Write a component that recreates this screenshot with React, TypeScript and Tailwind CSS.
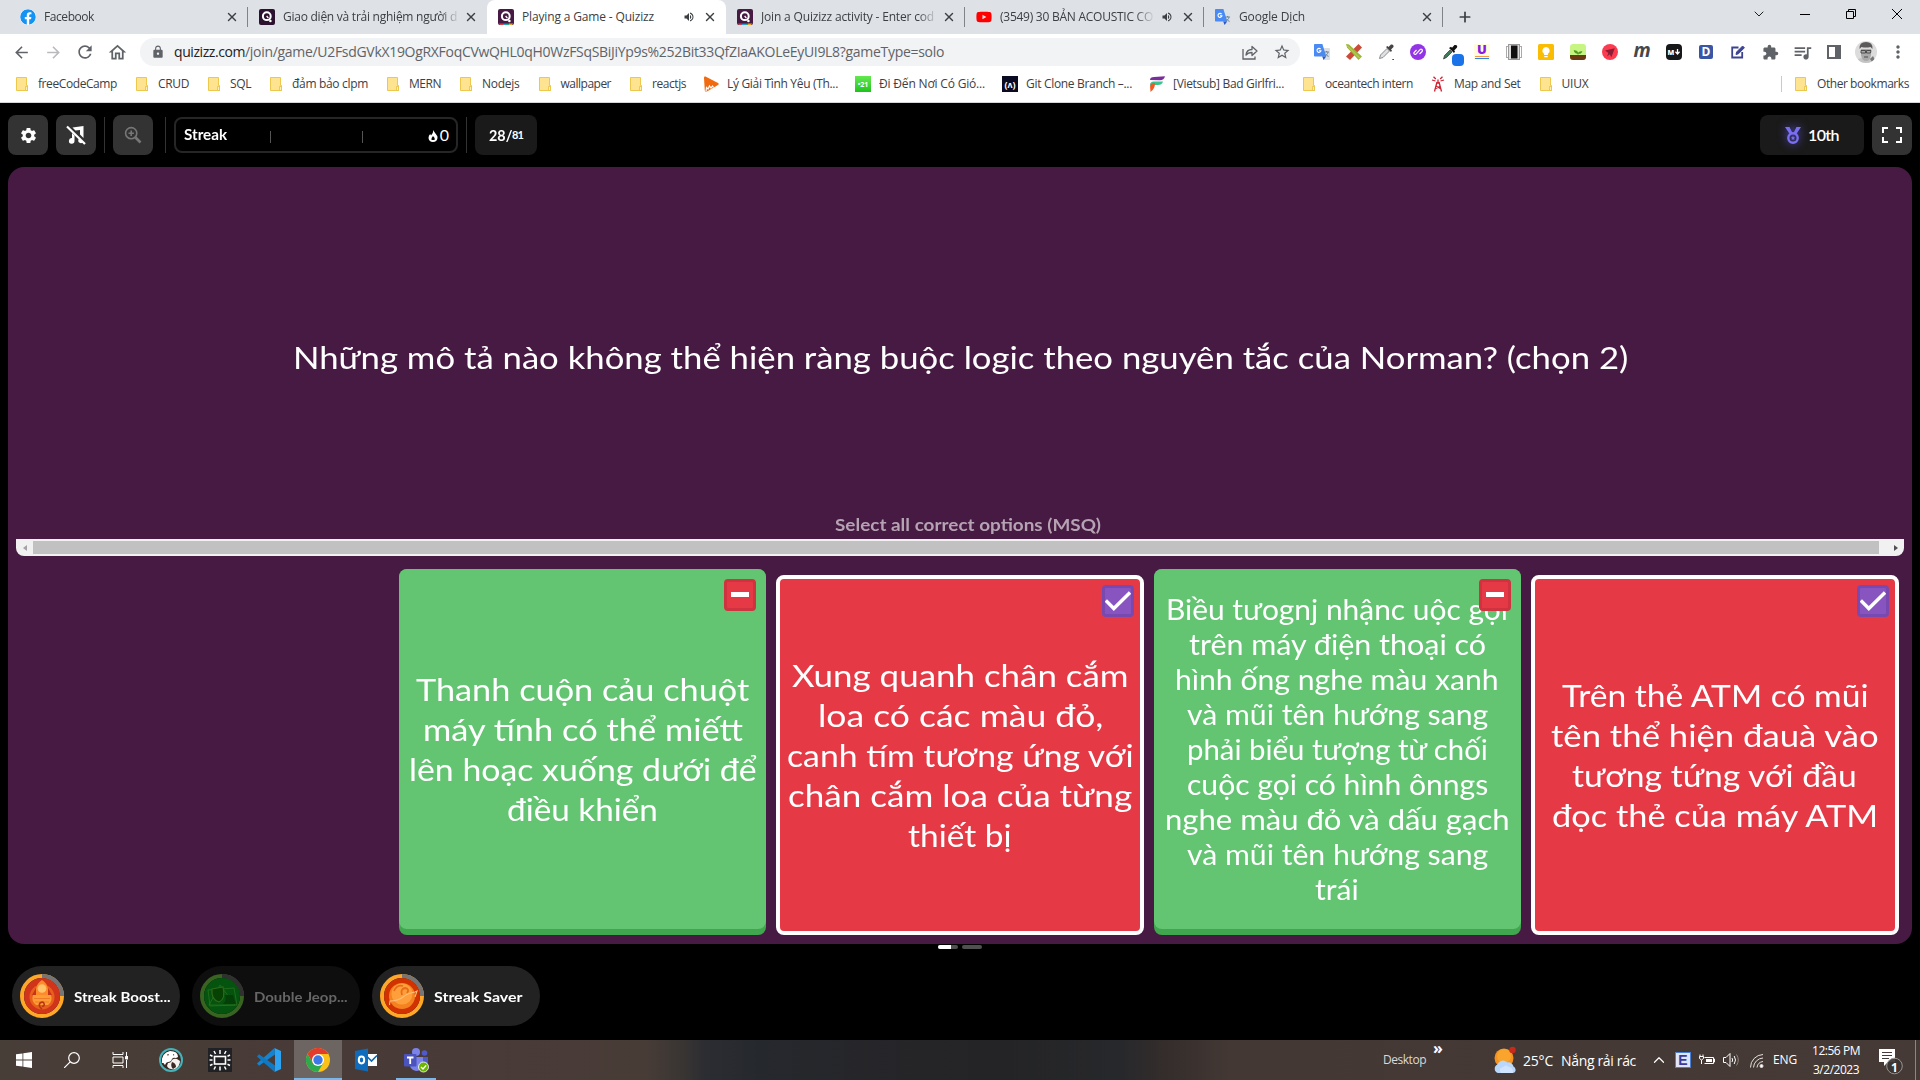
import { useLayoutEffect, useRef, useState } from 'react';
import type { ReactNode } from 'react';
import { FaFacebook, FaYoutube } from 'react-icons/fa';
import {
  MdArrowBack,
  MdArrowForward,
  MdExtension,
  MdLock,
  MdMoreVert,
  MdOutlineHome,
  MdQueueMusic,
  MdRefresh,
  MdSettings,
  MdStarBorder,
  MdVolumeUp,
} from 'react-icons/md';
import { Check, ChevronDown, ChevronUp, Plus, X } from 'lucide-react';

/* One line of text, tracked so that it fills the given width. */
function Line({ w, children, className = '' }: { w: number; children: string; className?: string }) {
  const ref = useRef<HTMLSpanElement>(null);
  const [tracking, setTracking] = useState(0);
  useLayoutEffect(() => {
    const el = ref.current;
    if (!el) return;
    const natural = el.getBoundingClientRect().width;
    setTracking((w - natural) / children.length);
  }, [w, children]);
  return (
    <span ref={ref} className={`inline-block whitespace-pre ${className}`} style={{ letterSpacing: `${tracking}px` }}>
      {children}
    </span>
  );
}

/* One line of wide display text, its letters stretched to fill the given width. */
function WideLine({ w, children, className = '' }: { w: number; children: string; className?: string }) {
  const ref = useRef<HTMLSpanElement>(null);
  const [scale, setScale] = useState(1);
  useLayoutEffect(() => {
    if (ref.current) setScale(w / ref.current.offsetWidth);
  }, [w, children]);
  return (
    <span className={`inline-block whitespace-pre ${className}`} style={{ width: w }}>
      <span ref={ref} className="inline-block origin-left" style={{ transform: `scaleX(${scale})` }}>
        {children}
      </span>
    </span>
  );
}

/* ---------- tab strip ---------- */

function QuizizzIcon({ rainbow = false }: { rainbow?: boolean }) {
  return (
    <svg viewBox="0 0 16 16" className="size-4">
      <rect width="16" height="16" rx="2" fill={rainbow ? '#461a42' : '#2d1230'} />
      {rainbow && (
        <g>
          <path d="M1 14.600h4V16H2z" fill="#e03c4a" />
          <path d="M5 14.600h3V16H5z" fill="#2d9cdb" />
          <path d="M8 14.600h3V16H8z" fill="#27ae8f" />
          <path d="M11 14.600h4L14 16h-3z" fill="#f2a623" />
        </g>
      )}
      <circle cx="7.800" cy="7.200" r="3.900" fill="none" stroke="#fff" strokeWidth="2" />
      <circle cx="11.400" cy="12" r="1.300" fill="#fff" />
      <path d="M7.600 7l1.800 2.200" stroke="#fff" strokeWidth="1.300" />
    </svg>
  );
}

function TranslateIcon() {
  return (
    <svg viewBox="0 0 16 16" className="size-4">
      <path d="M6 4h9.200q.8 0 .8.8v10.400q0 .8-.8.8H9.600z" fill="#dcdfe3" />
      <path d="M.8 0h7.600l3.800 12.600H.8Q0 12.600 0 11.800V.8Q0 0 .8 0z" fill="#4a8af4" />
      <path d="M8.200 12.600h4L9.600 16z" fill="#2a56c6" />
      <path d="M6.600 5.100A2 2 0 1 0 7 6.700H5" fill="none" stroke="#fff" strokeWidth="1.100" />
      <path d="M10.300 8h4.600M12.600 7v1M14 8.200c-.4 2-1.800 3.200-3 4M11.600 9.800c.8 1.400 1.800 2.200 3 2.600" fill="none" stroke="#5f7d95" strokeWidth=".9" />
    </svg>
  );
}

type TabInfo = { icon: ReactNode; title: string; w: number; active?: boolean; sound?: boolean; rule?: boolean };

const tabs: TabInfo[] = [
  { icon: <FaFacebook className="size-4 rounded-full bg-white text-[#1593f5]" />, title: 'Facebook', w: 50 },
  { icon: <QuizizzIcon />, title: 'Giao diện và trải nghiệm người d', w: 174, rule: true },
  { icon: <QuizizzIcon rainbow />, title: 'Playing a Game - Quizizz', w: 132, active: true, sound: true },
  { icon: <QuizizzIcon rainbow />, title: 'Join a Quizizz activity - Enter cod', w: 173 },
  { icon: <FaYoutube className="size-4 text-[#f00]" />, title: '(3549) 30 BẢN ACOUSTIC CO', w: 153, sound: true, rule: true },
  { icon: <TranslateIcon />, title: 'Google Dịch', w: 66, rule: true },
];

function Tab({ tab }: { tab: TabInfo }) {
  return (
    <div
      className={`relative flex h-[34px] w-[239px] items-center pl-[11px] pr-[9px] ${
        tab.active ? 'rounded-t-lg bg-white' : ''
      }`}
    >
      {tab.rule && <div className="absolute -left-px top-[7px] h-5 w-px bg-[#808387]" />}
      {tab.icon}
      <div
        className={`ml-2 min-w-0 flex-1 overflow-hidden text-[12px] leading-5 text-[#3c4043] ${
          tab.active ? '' : '[mask-image:linear-gradient(90deg,#000_calc(100%-20px),transparent)]'
        }`}
      >
        <Line w={tab.w}>{tab.title}</Line>
      </div>
      {tab.sound && <MdVolumeUp className="ml-1.5 mr-1 size-3 text-[#3c4043]" />}
      <X className="ml-1 size-3.5 text-[#3c4043]" strokeWidth={2.4} />
    </div>
  );
}

function TabStrip() {
  return (
    <div className="flex h-[34px] bg-[#dee1e6] pl-[9px]">
      {tabs.map((t) => (
        <Tab key={t.title} tab={t} />
      ))}
      <div className="flex items-center border-l border-transparent pl-[13px]">
        <div className="-ml-[15px] mr-[14px] h-5 w-px bg-[#808387]" />
        <Plus className="size-4 text-[#3c4043]" strokeWidth={2.6} />
      </div>
      <div className="ml-auto flex h-7 text-black">
        <div className="flex w-[46px] items-center justify-center">
          <ChevronDown className="size-4" strokeWidth={1.3} />
        </div>
        <div className="flex w-[46px] items-center justify-center">
          <div className="h-px w-2.5 bg-black" />
        </div>
        <div className="flex w-[46px] items-center justify-center">
          <svg viewBox="0 0 10 10" className="size-2.5" fill="none" stroke="#000">
            <path d="M.5 2.500h7v7h-7zM2.500 2.500v-2h7v7h-2" />
          </svg>
        </div>
        <div className="flex w-[46px] items-center justify-center">
          <svg viewBox="0 0 10 10" className="size-2.5" fill="none" stroke="#000">
            <path d="M0 0l10 10M10 0L0 10" />
          </svg>
        </div>
      </div>
    </div>
  );
}

/* ---------- address bar ---------- */

const extensions: ReactNode[] = [
  <TranslateIcon />,
  <svg viewBox="0 0 16 16" className="size-4">
    <path d="M12.500 0L16 3.500 4 16l-4-3.500z" fill="#cb4b38" />
    <path d="M0 0l3 .5 13 12-3.500 3.500L1 3.500z" fill="#9fb53b" />
    <path d="M1.500 2l12 12" stroke="#c5d66b" strokeWidth="1" />
  </svg>,
  <svg viewBox="0 0 16 16" className="size-4">
    <path d="M1.500 14.500L2.500 11 9 4.500l2.500 2.500L5 13.500z" fill="#dfe1e3" stroke="#8a8d91" />
    <path d="M8 3l5 5 1-1.500-1-1L15.500 3Q16 0 13 .5L10.500 3l-1-1z" fill="#444" />
    <rect x="14.500" y="15" width="1.200" height="1" fill="#000" />
  </svg>,
  <svg viewBox="0 0 16 16" className="size-4">
    <circle cx="8" cy="8" r="8" fill="#9334e6" />
    <path d="M6.500 6L4 8.500a1.300 1.300 0 0 0 2 1.600L9.800 5.800a1.400 1.400 0 0 1 2.300 1.700L9.500 10" fill="none" stroke="#fff" strokeWidth="1.200" />
  </svg>,
  <div className="relative">
    <svg viewBox="0 0 16 16" className="size-4">
      <path d="M1.500 15L2.500 11.500 8 6l2 2-5.500 5.500z" fill="#3c7a5a" stroke="#222" strokeWidth=".6" />
      <path d="M7 4l5 5 1-1.500-.8-1L15 3.500Q16 .5 12.500 1L10 3.800l-1-1z" fill="#111" />
    </svg>
    <div className="absolute left-2.5 top-2.5 size-3 rounded-sm bg-[#1a73e8]" />
  </div>,
  <div className="flex size-4 flex-col items-center bg-[#fffbdc] text-[13px] font-black leading-[11px] text-[#8a1be0]">
    U
    <div className="mt-px h-px w-[14px] bg-[#f2994a]" />
    <div className="mt-px h-px w-[14px] bg-[#2f80ed]" />
  </div>,
  <svg viewBox="0 0 16 16" className="size-4">
    <rect x=".5" y="2.500" width="15" height="11" fill="none" stroke="#aaa" />
    <rect x="2.500" y=".5" width="11" height="15" fill="#ddd" stroke="#999" />
    <rect x="5" y="1.500" width="6.500" height="13" fill="#111" />
  </svg>,
  <svg viewBox="0 0 16 16" className="size-4">
    <rect width="16" height="16" rx="1.500" fill="#fbbc04" />
    <path d="M8 3a3.700 3.700 0 0 0-2 6.800V11h4V9.800A3.700 3.700 0 0 0 8 3zM6.300 12h3.400v1.300H6.300z" fill="#fff" />
  </svg>,
  <svg viewBox="0 0 16 16" className="size-4">
    <rect width="16" height="16" rx="3" fill="#c6f582" />
    <path d="M0 11h16v2q0 3-3 3H3q-3 0-3-3z" fill="#6b3a13" />
    <path d="M8 11V9M8 9.500Q4.500 9.500 4 6.500 8 6.500 8 9.500q.5-2 4-2-.5 2.600-4 2" fill="#4c9a1f" stroke="#4c9a1f" strokeWidth=".6" />
  </svg>,
  <svg viewBox="0 0 16 16" className="size-4">
    <circle cx="8" cy="8" r="8" fill="#fb3c50" />
    <path d="M3 6.500l9.800-2.300-3.500 9-1.500-3-2.800 2.300 1.400-3.400z" fill="#8e1d33" />
  </svg>,
  <span className="mb-1 text-[19px] font-bold italic leading-4 text-[#44474b]">m</span>,
  <div className="flex size-4 items-center justify-center gap-px rounded bg-[#17181a] text-[7px] font-black leading-none text-white">
    <span>M</span>
    <svg viewBox="0 0 5 6" className="h-1.5 w-[5px]" fill="none" stroke="#fff" strokeWidth="1.300">
      <path d="M2.500 0v5M.4 2.800l2.100 2.200 2.100-2.200" />
    </svg>
  </div>,
  <div className="flex size-[14px] items-center justify-center rounded-[2px] bg-[#3a55a4] text-[12px] font-bold leading-none text-white">D</div>,
  <svg viewBox="0 0 16 16" className="size-4" fill="none" stroke="#3c4390">
    <path d="M8.500 3.500H2.200v10h10V8" strokeWidth="1.800" />
    <path d="M6 10.500L6.600 8l6-6 1.800 1.800-6 6z" fill="#3c4390" strokeWidth="1" />
  </svg>,
  <MdExtension className="size-[17px] text-[#5f6368]" />,
  <MdQueueMusic className="size-[21px] text-[#5f6368]" />,
  <svg viewBox="0 0 14 14" className="size-[14px]">
    <path d="M0 0h14v14H0zM2 2v10h6V2z" fill="#5f6368" fillRule="evenodd" />
  </svg>,
  <svg viewBox="0 0 22 22" className="size-[22px]">
    <clipPath id="avatar">
      <circle cx="11" cy="11" r="11" />
    </clipPath>
    <g clipPath="url(#avatar)">
      <rect width="22" height="22" fill="#dcdcdc" />
      <path d="M1 22q1-5 6-5h8q5 1 6 5z" fill="#c4c4c4" />
      <path d="M6 8h10v6q-1 6-5 6t-5-6z" fill="#a9a9a9" />
      <path d="M4.500 8q-.5-7 6.500-7 7 0 6.500 7l-2-2q-5 1-9 0z" fill="#5a5a5a" />
      <path d="M6 9.500h4.500v2.500H6zM11.500 9.500H16l-.5 2.500h-4zM9 16h4" fill="none" stroke="#444" strokeWidth=".9" />
      <path d="M15 18l3-3 2 4-2 3z" fill="#777" />
    </g>
  </svg>,
  <MdMoreVert className="size-5 text-[#5f6368]" />,
];

function AddressBar() {
  return (
    <div className="flex h-9 items-center bg-white pl-[5px] text-[#5f6368]">
      <div className="flex w-8 justify-center">
        <MdArrowBack className="size-[19px]" />
      </div>
      <div className="flex w-8 justify-center">
        <MdArrowForward className="size-[19px] text-[#b8babd]" />
      </div>
      <div className="flex w-8 justify-center">
        <MdRefresh className="size-[20px]" />
      </div>
      <div className="flex w-8 justify-center">
        <MdOutlineHome className="size-[21px]" />
      </div>
      <div className="ml-[7px] flex h-7 w-[1160px] items-center rounded-full bg-[#f1f3f4] pl-[11px] pr-[9px]">
        <MdLock className="size-[14px]" />
        <div className="ml-[9px] flex text-[14px] leading-5">
          <Line w={71} className="text-[#202124]">quizizz.com</Line>
          <Line w={699}>/join/game/U2FsdGVkX19OgRXFoqCVwQHL0qH0WzFSqSBiJiYp9s%252Bit33QfZIaAKOLeEyUI9L8?gameType=solo</Line>
        </div>
        <svg viewBox="0 0 16 16" className="ml-auto size-4" fill="none" stroke="#5f6368" strokeWidth="1.300">
          <path d="M1 5v10h12v-2.500" />
          <path d="M4 11q.5-5.500 6-5.500V2.500l5 4.500-5 4.500V8.500Q6 8.500 4 11z" strokeLinejoin="round" />
        </svg>
        <MdStarBorder className="ml-[15px] size-[18px]" />
      </div>
      <div className="ml-[6px] flex">
        {extensions.map((e, i) => (
          <div key={i} className="flex w-8 items-center justify-center">
            {e}
          </div>
        ))}
      </div>
    </div>
  );
}

/* ---------- bookmarks ---------- */

function Folder() {
  return (
    <svg viewBox="0 0 16 16" className="size-4">
      <path d="M2.500 1.500h10v8h1v5H2.500z" fill="#fee391" stroke="#edc84c" />
      <path d="M11.500 14.500v-4h2v4z" fill="#fdf0bd" stroke="#e9c040" strokeWidth=".8" />
    </svg>
  );
}

const bookmarks: { label: string; w: number; icon?: ReactNode }[] = [
  { label: 'freeCodeCamp', w: 79 },
  { label: 'CRUD', w: 31 },
  { label: 'SQL', w: 21 },
  { label: 'đảm bảo clpm', w: 76 },
  { label: 'MERN', w: 32 },
  { label: 'Nodejs', w: 37.5 },
  { label: 'wallpaper', w: 50.5 },
  { label: 'reactjs', w: 34 },
  {
    label: 'Lý Giải Tình Yêu (Th...',
    w: 111,
    icon: (
      <svg viewBox="0 0 16 16" className="size-4">
        <path d="M1 1.500Q1 0 2.500.5L15 7q1.500 1 0 2L4 15.500q-2 .8-2.200-1z" fill="#f26a0f" />
        <path d="M3 15.500l.5-4 1.500 1.500 1.500-3 1.500 2 1.500-2 1 1.500" fill="none" stroke="#fff" strokeWidth="1.200" />
      </svg>
    ),
  },
  {
    label: 'Đi Đến Nơi Có Gió...',
    w: 106,
    icon: (
      <div className="flex size-4 items-center justify-center bg-linear-to-b from-[#63e84f] to-[#19c41b] text-[7px] font-bold leading-none text-white">
        •21
      </div>
    ),
  },
  {
    label: 'Git Clone Branch –...',
    w: 106,
    icon: (
      <div className="flex size-4 items-center justify-center bg-[#0a0a23] text-[9px] font-bold leading-none text-white">(ʌ)</div>
    ),
  },
  {
    label: '[Vietsub] Bad Girlfri...',
    w: 111,
    icon: (
      <svg viewBox="0 0 16 16" className="size-4">
        <path d="M1 4Q1 1 5 1l11-.8Q15 4 11 4.200z" fill="#7a2e9e" />
        <path d="M1 9q0-3.500 4-3.500h9Q13 9 9 9z" fill="#3cc48f" />
        <path d="M1 9.500q1-3 5-2.500 0 6-4.500 9z" fill="#f15a24" />
      </svg>
    ),
  },
  { label: 'oceantech intern', w: 88 },
  {
    label: 'Map and Set',
    w: 66.5,
    icon: (
      <svg viewBox="0 0 16 16" className="size-4" fill="none" stroke="#cf2233" strokeWidth="1.300">
        <path d="M7 6L4.500 15.500M9 6l2.500 9.500M5 13l5.500-3M11 13L6 10M6.500 7h3M8 3.500v3M5.500 5L2 4M5.800 3L3.500.8M10.500 5L14 4M10.200 3L12.500.8" />
      </svg>
    ),
  },
  { label: 'UIUX', w: 27 },
];

function Bookmark({ label, w, icon }: { label: string; w: number; icon?: ReactNode }) {
  return (
    <div className="flex items-center gap-2">
      {icon ?? <Folder />}
      <Line w={w}>{label}</Line>
    </div>
  );
}

function BookmarksBar() {
  return (
    <div className="flex h-[33px] items-center gap-[17px] border-b border-[#d5d7da] bg-white pb-1 pl-[14px] pr-[11px] text-[12px] leading-5 text-[#3c4043]">
      {bookmarks.map((b) => (
        <Bookmark key={b.label} {...b} />
      ))}
      <div className="ml-auto flex items-center gap-[11px]">
        <div className="h-4 w-px bg-[#c8cacd]" />
        <Bookmark label="Other bookmarks" w={92} />
      </div>
    </div>
  );
}

/* ---------- game ---------- */

function Divider() {
  return <div className="h-9 w-px bg-[#333]" />;
}

function GameHeader() {
  return (
    <div className="flex h-16 items-center px-2 pb-0 text-white">
      <div className="flex size-10 items-center justify-center rounded-lg bg-[#333]">
        <MdSettings className="size-[19px]" />
      </div>
      <div className="ml-2 mr-2 flex size-10 items-center justify-center rounded-lg bg-[#333]">
        <svg viewBox="0 0 20 20" className="size-5" fill="#fff">
          <path d="M6.500 2.500L17.500 1v12L14 9.500V5L9.500 5.500z" />
          <path d="M6 8l2.500 2.500v5.500a2.800 2.800 0 1 1-2.500-2.900z" />
          <path d="M1 1.500L19 19" stroke="#fff" strokeWidth="2.200" />
          <path d="M13 13.500l4 4q-2.500 1.500-4.500-.5-.8-2 .5-3.500z" />
        </svg>
      </div>
      <Divider />
      <div className="ml-2 mr-3 flex size-10 items-center justify-center rounded-lg bg-[#333]">
        <svg viewBox="0 0 18 18" className="size-[18px]" fill="none" stroke="#777" strokeWidth="1.600">
          <circle cx="7.200" cy="7.200" r="5.600" />
          <path d="M7.200 4.500v5.400M4.500 7.200h5.400" />
          <path d="M11.500 11.500L16.500 16.500" strokeWidth="2.600" />
        </svg>
      </div>
      <Divider />
      <div className="ml-2 mr-2 flex h-9 w-[284px] items-center rounded-lg border-2 border-[#262626] pl-2 pr-[7px] font-['Lato'] text-[14.5px] font-bold">
        <WideLine w={43}>Streak</WideLine>
        <div className="ml-[43px] mt-1 h-3 w-px bg-[#555]" />
        <div className="ml-[91px] mt-1 h-3 w-px bg-[#555]" />
        <svg viewBox="0 0 10 12" className="ml-auto mr-0.5 mt-0.5 h-3 w-2.5">
          <path d="M5.500 0Q6 2.200 8 4.200T9.500 8Q9 12 5 12T.5 8Q.5 5.500 2.200 4l.8 1.500Q5.200 3.500 5.500 0z" fill="#fff" />
          <path d="M5 6q2.500 2 1.600 4H3.500Q3 8 5 6z" fill="#000" />
        </svg>
        <span className="text-[16px] font-normal">0</span>
      </div>
      <Divider />
      <div className="ml-2 flex h-10 w-[62px] items-center justify-center rounded-lg bg-[#1a1a1a] font-['Lato'] font-bold">
        <WideLine w={23} className="text-[15px]">28/</WideLine>
        <Line w={11} className="text-[11px]">81</Line>
      </div>
      <div className="ml-auto flex h-10 w-[104px] items-center justify-center gap-[7px] rounded-lg bg-[#1a1a1a] font-['Lato'] text-[16px] font-semibold">
        <svg viewBox="0 0 16 17" className="h-[17px] w-4 drop-shadow-[0_0_5px_#5b4fd0]">
          <path d="M0 0h4.500L7.500 6 5 7.500zM16 0h-4.500L8.500 6 11 7.500z" fill="#7a6ff0" />
          <circle cx="8" cy="11" r="4.700" fill="none" stroke="#7a6ff0" strokeWidth="2.400" />
          <path d="M8 8.800l.7 1.400 1.500.2-1.100 1.100.3 1.600L8 12.300l-1.400.8.3-1.600-1.100-1.100 1.500-.2z" fill="#7a6ff0" />
        </svg>
        <Line w={31}>10th</Line>
      </div>
      <div className="ml-2 flex size-10 items-center justify-center rounded-lg bg-[#333]">
        <svg viewBox="0 0 20 16" className="h-4 w-5" fill="none" stroke="#fff" strokeWidth="2">
          <path d="M1 6V1h5M14 1h5v5M19 10v5h-5M6 15H1v-5" />
        </svg>
      </div>
    </div>
  );
}

type CardInfo = { tone: 'green' | 'red'; small?: boolean; lines: [string, number][] };

const cards: CardInfo[] = [
  {
    tone: 'green',
    lines: [
      ['Thanh cuộn cảu chuột', 333],
      ['máy tính có thể miếtt', 320],
      ['lên hoạc xuống dưới để', 348],
      ['điều khiển', 151],
    ],
  },
  {
    tone: 'red',
    lines: [
      ['Xung quanh chân cắm', 337],
      ['loa có các màu đỏ,', 285],
      ['canh tím tương ứng với', 347],
      ['chân cắm loa của từng', 344],
      ['thiết bị', 104],
    ],
  },
  {
    tone: 'green',
    small: true,
    lines: [
      ['Biều tưognj nhậnc uộc gọi', 342],
      ['trên máy điện thoại có', 297],
      ['hình ống nghe màu xanh', 324],
      ['và mũi tên hướng sang', 301],
      ['phải biểu tượng từ chối', 301],
      ['cuộc gọi có hình ônngs', 301],
      ['nghe màu đỏ và dấu gạch', 345],
      ['và mũi tên hướng sang', 301],
      ['trái', 44],
    ],
  },
  {
    tone: 'red',
    lines: [
      ['Trên thẻ ATM có mũi', 306],
      ['tên thể hiện đauà vào', 328],
      ['tương tứng với đầu', 285],
      ['đọc thẻ của máy ATM', 326],
    ],
  },
];

function AnswerCard({ tone, small, lines }: CardInfo) {
  const green = tone === 'green';
  return (
    <div
      className={`relative flex w-[367.250px] flex-col items-center justify-center rounded-lg ${
        green ? 'h-[366px] bg-[#41a74e] pb-1.5' : 'h-[360px] border-4 border-white bg-[#e63946]'
      }`}
    >
      <div
        className={`flex w-full flex-1 flex-col items-center justify-center font-['Lato'] text-white ${
          green ? 'rounded-lg bg-[#63c572]' : ''
        } ${small ? 'text-[28px] leading-[35px]' : 'text-[31.500px] leading-10'}`}
      >
        {lines.map(([text, w], i) => (
          <WideLine key={i} w={w}>
            {text}
          </WideLine>
        ))}
      </div>
      <div
        className={`absolute flex size-8 items-center justify-center rounded border-[3px] ${
          green ? 'right-[10px] top-[10px] border-[#cf333f] bg-[#e63946]' : 'right-[6px] top-[6px] border-[#784ab0] bg-[#8854c0]'
        }`}
      >
        {green ? (
          <div className="mb-px h-[5px] w-[18px] bg-white" />
        ) : (
          <svg viewBox="0 0 26 26" className="size-[26px] shrink-0" fill="none" stroke="#fff" strokeWidth="3.400">
            <path d="M.8 12.500L8.800 20.500 25 4.500" />
          </svg>
        )}
      </div>
    </div>
  );
}

function ScrollTrack() {
  return (
    <div className="mx-2 flex h-[17px] shrink-0 items-center rounded-b-lg bg-[#f1f1f1]">
      <div className="flex w-[17px] justify-center">
        <div className="border-y-[3.500px] border-r-[4px] border-y-transparent border-r-[#a3a3a3]" />
      </div>
      <div className="h-[13px] flex-1 bg-[#c1c1c1]" />
      <div className="flex w-[25px] justify-end pr-1.5">
        <div className="border-y-[3.500px] border-l-[4px] border-y-transparent border-l-[#505050]" />
      </div>
    </div>
  );
}

function GameBoard() {
  return (
    <div className="mx-2 flex h-[777px] flex-col overflow-hidden rounded-2xl bg-[#461a42]">
      <div className="flex h-[346px] items-center justify-center pt-[34px] font-['Lato'] text-[31.500px] leading-10 text-white">
        <WideLine w={1335}>Những mô tả nào không thể hiện ràng buộc logic theo nguyên tắc của Norman? (chọn 2)</WideLine>
      </div>
      <div className="flex h-[26px] items-center justify-center pb-[3px] pl-4 font-['Lato'] text-[17.500px] font-bold leading-6 text-[#b5a3b3]">
        <WideLine w={266}>Select all correct options (MSQ)</WideLine>
      </div>
      <ScrollTrack />
      <div className="mt-[13px] flex items-end justify-end gap-[10.150px] pr-[13.500px]">
        {cards.map((c, i) => (
          <AnswerCard key={i} {...c} />
        ))}
      </div>
    </div>
  );
}

/* ---------- power-ups ---------- */

function PowerUpIcon({ kind }: { kind: 'boost' | 'jeopardy' | 'saver' }) {
  const jeopardy = kind === 'jeopardy';
  return (
    <svg viewBox="0 0 44 44" className="size-11">
      <circle cx="22" cy="22" r="20" fill="none" stroke={jeopardy ? '#386320' : '#ffa726'} strokeWidth="4" />
      <path d="M22 2a20 20 0 0 1 20 20" fill="none" stroke={jeopardy ? '#303030' : '#757575'} strokeWidth="4" />
      <circle cx="22" cy="22" r="18" fill={jeopardy ? '#04540f' : kind === 'boost' ? '#d0351b' : '#d13200'} />
      {kind === 'boost' && (
        <g>
          <circle cx="22" cy="23" r="12.500" fill="#e8601c" />
          <path d="M22 6q5 3 6 9v8H16v-8q1-6 6-9z" fill="#ff8a2c" />
          <path d="M16 14l-4 7 4 1zM28 14l4 7-4 1z" fill="#c83418" />
          <path d="M13 21h18q2 6-3 10H16q-5-4-3-10z" fill="#ff9c35" />
          <path d="M14 24.500h16M15 28h14" stroke="#f07a26" strokeWidth="1" />
          <circle cx="22" cy="14.500" r="4.300" fill="#ffc36c" />
          <path d="M22 35q-4-3-2-6 3-2 4 .5t-2 3" fill="none" stroke="#b93512" strokeWidth="1.600" />
        </g>
      )}
      {jeopardy && (
        <g>
          <path d="M8 16l26-2 3 17-27 1zM20 11l15 20H9z" fill="none" stroke="#2c7420" strokeWidth=".7" />
          <path d="M12 15l11-2q3 12-4 15-8-2-7-13z" fill="#064203" stroke="#2f6a18" strokeWidth="1.200" />
          <path d="M25 21h8l3 9H23q4-3 2-9z" fill="#053f08" />
        </g>
      )}
      {kind === 'saver' && (
        <g>
          <circle cx="22" cy="22" r="13" fill="#f58220" />
          <circle cx="22" cy="20" r="10.500" fill="#ff9f3c" />
          <path d="M14 17q3-7 9-5M22 21q-2-6 3-7 5 1 2 5" fill="none" stroke="#e86b18" strokeWidth="1.800" />
          <path d="M9.500 31L10 27q8 0 13-4t12-5l2-1-2 6" fill="none" stroke="#ffc078" strokeWidth="1.100" />
        </g>
      )}
    </svg>
  );
}

function PowerUps() {
  const items = [
    { kind: 'boost', label: 'Streak Boost...', w: 97 },
    { kind: 'jeopardy', label: 'Double Jeop...', w: 94 },
    { kind: 'saver', label: 'Streak Saver', w: 88 },
  ] as const;
  return (
    <div className="flex gap-3 px-3 pt-[17px]">
      {items.map((p) => (
        <div
          key={p.kind}
          className={`flex h-[60px] w-[168px] items-center gap-[10px] rounded-full pl-2 font-['Lato'] text-[14px] font-bold ${
            p.kind === 'jeopardy' ? 'bg-[#0e0e0e] text-[#666]' : 'bg-[#222] text-white'
          }`}
        >
          <PowerUpIcon kind={p.kind} />
          <WideLine w={p.w}>{p.label}</WideLine>
        </div>
      ))}
    </div>
  );
}

/* ---------- taskbar ---------- */

const apps: ReactNode[] = [
  <svg viewBox="0 0 16 16" className="size-4" fill="#fff">
    <path d="M0 2.300l6.500-.9v6.200H0zM7.300 1.300L16 0v7.600H7.300zM0 8.400h6.500v6.200L0 13.700zM7.300 8.400H16V16l-8.700-1.300z" />
  </svg>,
  <svg viewBox="0 0 16 16" className="size-4" fill="none" stroke="#fff" strokeWidth="1.200">
    <circle cx="10" cy="6" r="5.300" />
    <path d="M6.200 9.800L0 16" />
  </svg>,
  <svg viewBox="0 0 16 16" className="size-4" fill="none" stroke="#fff">
    <path d="M1 0v2.500h10V0M1 16v-2.500h10V16M1 5h10v6H1zM14.500 0v4.500M14.500 8v8" />
    <path d="M13.500 4.500h2.500v2.500h-2.500z" fill="#fff" />
  </svg>,
  <svg viewBox="0 0 24 24" className="ml-1.5 size-6">
    <circle cx="12" cy="12" r="11" fill="#3a2824" stroke="#45b3ba" strokeWidth="2" />
    <path d="M3 15Q2 5 11 3q8 0 8 6l-2 1q-3-1-4 1-1 3-4 3-2 0-3 3-1-1-1.500-2z" fill="#fff" />
    <path d="M9 15q3 0 4-3 2-2 5-1l3 2q0 5-5 8-6 1-8-3z" fill="#f4f1ee" />
    <path d="M13 14q4 1 4 5l-3 2q-3-3-1-7zM8 6.500l2-.5-1 2zM14 6l1.500 1-1.500.5z" fill="#3a2824" />
  </svg>,
  <svg viewBox="0 0 24 24" className="ml-2 size-6">
    <rect width="24" height="24" fill="#202124" />
    <rect x="6.500" y="8.500" width="11" height="7.500" fill="none" stroke="#fff" strokeWidth="1.600" />
    <path d="M12 2v4M12 18.500v4M1.500 12H4.500M19.500 12h3M6 3l1.500 3M18 3l-1.500 3M6 21.500l1.500-3M18 21.500l-1.500-3M2 7l2.500 1.200M22 7l-2.500 1.200M2 17.500l2.500-1.200M22 17.500l-2.500-1.200" stroke="#fff" strokeWidth="1.500" />
  </svg>,
  <svg viewBox="0 0 24 24" className="ml-2.5 size-6">
    <path d="M17.500 0L24 3v18l-6.500 3L18 17.500v-11z" fill="#2ea3f2" />
    <path d="M17.500 0L0 15.500l2 2.300L18 6.500z" fill="#1583cf" />
    <path d="M17.500 24L0 8.500l2-2.300L18 17.500z" fill="#0f79c4" />
  </svg>,
];

function TaskButton({ children, lit = false }: { children: ReactNode; lit?: boolean }) {
  return <div className={`flex h-10 w-12 items-center justify-center ${lit ? 'border-b-2 border-[#76b9ed] bg-[#6d6562] pt-0.5' : ''}`}>{children}</div>;
}

function Taskbar() {
  return (
    <div className="flex h-10 items-center bg-[linear-gradient(90deg,#483e38_0px,#483b37_330px,#483c37_645px,#3a3633_680px,#2c2d32_705px,#25282d_760px,#26262a_860px,#242426_1000px,#27282b_1120px,#342d2b_1165px,#433834_1230px,#453a35_1920px)] text-white">
      {apps.map((a, i) => (
        <TaskButton key={i}>{a}</TaskButton>
      ))}
      <div className="ml-[6px]">
        <TaskButton lit>
          <svg viewBox="0 0 24 24" className="size-6">
            <circle cx="12" cy="12" r="12" fill="#fbc116" />
            <path d="M1.600 6A12 12 0 0 1 22.400 6H12L6.800 15z" fill="#e33b2e" />
            <path d="M1.600 6A12 12 0 0 0 12 24l5.200-9H6.800z" fill="#2da94f" />
            <circle cx="12" cy="12" r="6" fill="#fff" />
            <circle cx="12" cy="12" r="4.700" fill="#3c79e6" />
          </svg>
        </TaskButton>
      </div>
      <TaskButton>
        <svg viewBox="0 0 24 24" className="size-6">
          <path d="M11 6h12v12H11z" fill="#fff" />
          <path d="M12 7.500l5.500 5.500L23 7.500" fill="none" stroke="#1067b5" strokeWidth="1.600" />
          <path d="M1 3l13-2.500v23L1 21z" fill="#0f6cbd" />
          <ellipse cx="7.500" cy="12" rx="2.700" ry="3.400" fill="none" stroke="#fff" strokeWidth="2" />
        </svg>
      </TaskButton>
      <div className="flex h-10 w-[52px] items-center justify-center">
        <div className="flex h-10 w-10 items-center justify-center border-b-2 border-[#76b9ed] pt-0.5">
          <svg viewBox="0 0 26 26" className="size-[26px]">
            <circle cx="13" cy="5" r="4" fill="#7b83eb" />
            <circle cx="21.500" cy="6" r="2.800" fill="#5059c9" />
            <path d="M16 10h9v8q-2 5-7 4z" fill="#5059c9" />
            <path d="M7 10h13v9q-2 5-7 5-5-1-6-5z" fill="#7b83eb" />
            <rect x="1" y="7" width="12.500" height="12.500" rx="1" fill="#4b53bc" />
            <path d="M4 10.500h6.500M7.200 10.500v6.500" stroke="#fff" strokeWidth="1.800" />
            <circle cx="20.500" cy="20" r="5" fill="#6bb700" stroke="#fff" strokeWidth=".8" />
            <path d="M18 20l2 2 3.200-3.600" fill="none" stroke="#fff" strokeWidth="1.400" />
          </svg>
        </div>
      </div>

      <div className="ml-auto flex h-10 items-center text-[12px] leading-5">
        <Line w={43} className="text-[#dcd9d8]">Desktop</Line>
        <span className="mb-6 ml-[7px] w-[10px] text-[16px] font-bold leading-5">»</span>
        <svg viewBox="0 0 24 28" className="ml-[50px] h-7 w-6">
          <circle cx="11" cy="12" r="9.500" fill="#f6921e" />
          <circle cx="11" cy="10" r="7" fill="#fbb035" fillOpacity=".6" />
          <circle cx="19.500" cy="4" r="3.200" fill="#c42b1c" />
          <path d="M5 27a4.500 4.500 0 0 1-.5-8.500 6 6 0 0 1 10-2 5 5 0 0 1 6 4Q23 22 22.500 25q-.5 2-3 2z" fill="#b9d6fb" />
          <path d="M8 27q-3-5 2-6 3-3 6 0 4 0 4 6z" fill="#dceafd" fillOpacity=".7" />
        </svg>
        <Line w={30} className="ml-1.5 mt-0.5 text-[14px]">25°C</Line>
        <Line w={75} className="ml-2 mt-0.5 text-[14px]">Nắng rải rác</Line>
        <ChevronUp className="ml-[14px] size-[18px]" strokeWidth={1.6} />
        <div className="ml-[7px] flex size-4 items-center justify-center border border-[#4a7fd6] bg-[#dfe6fb] font-['Liberation_Sans'] text-[14px] font-bold leading-none text-[#3c3c96]">E</div>
        <svg viewBox="0 0 16 14" className="ml-2 h-3.5 w-4" fill="none" stroke="#fff">
          <path d="M5.500 4.500h9v6h-9M14.500 6h1v3h-1" />
          <path d="M7 6h6v3H7z" fill="#fff" stroke="none" />
          <path d="M1 1.500v2M4 1.500v2M.5 3.500h4v2l-2 1.500-2-1.500zM2.500 7v4" />
        </svg>
        <svg viewBox="0 0 18 16" className="ml-2 h-4 w-[18px]" fill="none" stroke="#fff">
          <path d="M.5 5.500h2.500l4-4v13l-4-4H.5zM9 6q1.300 2 0 4M11.200 4q2.600 4 0 8" />
          <path d="M13.500 2.500q3.600 5.500 0 11" stroke="#8b837f" />
        </svg>
        <svg viewBox="0 0 16 16" className="ml-2 h-4 w-4" fill="none" stroke="#e4e0df">
          <path d="M1.500 15.500A13 13 0 0 1 14 2.500M4.500 15.500A10 10 0 0 1 14 6M8 15.500A7 7 0 0 1 14 9.500" />
          <circle cx="12.500" cy="14" r="1.500" fill="#fff" />
        </svg>
        <Line w={24} className="ml-2">ENG</Line>
        <div className="ml-[14px] flex w-[50px] flex-col items-center leading-[19px]">
          <Line w={48}>12:56 PM</Line>
          <Line w={46}>3/2/2023</Line>
        </div>
        <svg viewBox="0 0 26 26" className="ml-[18px] mr-[11px] mt-1 h-[26px] w-[26px]">
          <path d="M0 0h16v13H9l-4 4v-4H0z" fill="#fff" />
          <path d="M3 3.500h10M3 6.500h10M3 9.500h7" stroke="#453a35" />
          <circle cx="15.500" cy="17" r="7.800" fill="#3a3432" fillOpacity=".92" stroke="#9a9491" />
        </svg>
        <span className="-ml-[25px] mr-[18px] mt-[15px] w-1.5 text-center font-bold">1</span>
        <div className="mr-1 h-10 w-px bg-[#8d8784]" />
      </div>
    </div>
  );
}

export default function App() {
  return (
    <div className="flex h-[1080px] w-[1920px] flex-col overflow-hidden bg-black font-['Open_Sans',sans-serif]">
      <TabStrip />
      <AddressBar />
      <BookmarksBar />
      <GameHeader />
      <GameBoard />
      <div className="ml-[938px] mt-px flex h-1 gap-1">
        <div className="h-1 w-5 overflow-hidden rounded-[2px] bg-[#505050]">
          <div className="h-1 w-[13px] bg-white" />
        </div>
        <div className="h-1 w-5 rounded-[2px] bg-[#505050]" />
      </div>
      <PowerUps />
      <div className="mt-auto">
        <Taskbar />
      </div>
    </div>
  );
}
